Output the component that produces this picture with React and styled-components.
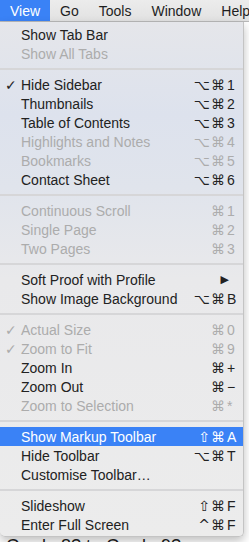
import React from 'react';
import styled, { createGlobalStyle, css } from 'styled-components';

// ---------------- DATA ----------------
const menuTitles = ['View', 'Go', 'Tools', 'Window', 'Help'];

const sections = [
  [
    { label: 'Show Tab Bar' },
    { label: 'Show All Tabs', disabled: true },
  ],
  [
    { label: 'Hide Sidebar', checked: true, mods: '⌥⌘', key: '1' },
    { label: 'Thumbnails', mods: '⌥⌘', key: '2' },
    { label: 'Table of Contents', mods: '⌥⌘', key: '3' },
    { label: 'Highlights and Notes', disabled: true, mods: '⌥⌘', key: '4' },
    { label: 'Bookmarks', disabled: true, mods: '⌥⌘', key: '5' },
    { label: 'Contact Sheet', mods: '⌥⌘', key: '6' },
  ],
  [
    { label: 'Continuous Scroll', disabled: true, mods: '⌘', key: '1' },
    { label: 'Single Page', disabled: true, mods: '⌘', key: '2' },
    { label: 'Two Pages', disabled: true, mods: '⌘', key: '3' },
  ],
  [
    { label: 'Soft Proof with Profile', submenu: true },
    { label: 'Show Image Background', mods: '⌥⌘', key: 'B' },
  ],
  [
    { label: 'Actual Size', checked: true, disabled: true, mods: '⌘', key: '0' },
    { label: 'Zoom to Fit', checked: true, disabled: true, mods: '⌘', key: '9' },
    { label: 'Zoom In', mods: '⌘', key: '+' },
    { label: 'Zoom Out', mods: '⌘', key: '−' },
    { label: 'Zoom to Selection', disabled: true, mods: '⌘', key: '*' },
  ],
  [
    { label: 'Show Markup Toolbar', selected: true, mods: '⇧⌘', key: 'A' },
    { label: 'Hide Toolbar', mods: '⌥⌘', key: 'T' },
    { label: 'Customise Toolbar…' },
  ],
  [
    { label: 'Slideshow', mods: '⇧⌘', key: 'F' },
    { label: 'Enter Full Screen', mods: '^⌘', key: 'F' },
  ],
];

// ---------------- COMPONENT ----------------
export default function App() {
  return (
    <>
      <GlobalStyle />
      <Screen>
        <MenuBar>
          {menuTitles.map((t, i) => (
            <MenuTitle key={t} $active={i === 0}>{t}</MenuTitle>
          ))}
        </MenuBar>

        <Document>
          <DocText>Grade 8? to Grade 9?</DocText>
        </Document>

        <Dropdown>
          {sections.map((items, si) => (
            <React.Fragment key={si}>
              {si > 0 && <Separator />}
              {items.map(item => (
                <Item key={item.label} $disabled={item.disabled} $selected={item.selected}>
                  {item.checked && <Check>✓</Check>}
                  <Label>{item.label}</Label>
                  {item.submenu && <Arrow>▶</Arrow>}
                  {item.key && (
                    <Shortcut>
                      <Mods>{item.mods}</Mods>
                      <Key>{item.key}</Key>
                    </Shortcut>
                  )}
                </Item>
              ))}
            </React.Fragment>
          ))}
        </Dropdown>
      </Screen>
    </>
  );
}

// ---------------- STYLES ----------------
const GlobalStyle = createGlobalStyle`
  body {
    margin: 0;
    font-family: 'Liberation Sans', 'DejaVu Sans', Arial, sans-serif;
  }
`;

const Screen = styled.div`
  position: relative;
  width: 249px;
  height: 542px;
  overflow: hidden;
  background: #f4f4f4;
`;

const MenuBar = styled.div`
  display: flex;
  height: 22px;
  background: linear-gradient(180deg, #ececec, #e2e2e2);
  border-bottom: 1px solid #b9b9b9;
  box-sizing: border-box;
  white-space: nowrap;
`;

const MenuTitle = styled.div`
  display: flex;
  align-items: center;
  padding: 0 10px;
  font-size: 14px;
  color: #1e1e1e;

  ${p => p.$active && css`
    background: #3a82f6;
    color: #fff;
  `}
`;

const Document = styled.div`
  height: 520px;
  background: #fff;
  display: flex;
  flex-direction: column;
  justify-content: flex-end;
  padding-left: 6px;
`;

const DocText = styled.div`
  font-size: 18px;
  line-height: 20px;
  color: #222;
  margin-bottom: -14px;
`;

const Dropdown = styled.div`
  position: absolute;
  top: 22px;
  left: 0;
  width: 244px;
  padding: 3px 0 2px;
  box-sizing: border-box;
  background: linear-gradient(180deg, #e5e6ea 0%, #dde2ed 18%, #e0e4ec 32%, #e9e9eb 50%, #ececec 100%);
  border-right: 1px solid #c4c4c4;
  border-bottom: 1px solid #c4c4c4;
  border-radius: 0 0 5px 5px;
  box-shadow: 0 4px 10px rgba(0, 0, 0, 0.25);
`;

const Separator = styled.div`
  height: 12px;
  display: flex;
  align-items: center;

  &::after {
    content: '';
    flex: 1;
    height: 2px;
    background: #d6d6d8;
  }
`;

const Item = styled.div`
  position: relative;
  display: flex;
  align-items: center;
  height: 19px;
  padding: 0 6px 0 21px;
  font-size: 14px;
  color: ${p => (p.$disabled ? '#acacac' : '#222')};
  white-space: nowrap;

  ${p => p.$selected && css`
    background: #3a82f6;
    color: #fff;
  `}
`;

const Check = styled.span`
  position: absolute;
  left: 5px;
  font-size: 14px;
  font-family: 'DejaVu Sans', sans-serif;
`;

const Label = styled.span`
  flex: 1;
`;

const Arrow = styled.span`
  font-size: 11px;
  font-family: 'DejaVu Sans', sans-serif;
  margin-right: 8px;
`;

const Shortcut = styled.span`
  display: flex;
  align-items: center;
`;

const Mods = styled.span`
  font-family: 'DejaVu Sans', sans-serif;
  font-size: 14px;
  letter-spacing: 1px;
  margin-right: 1px;
`;

const Key = styled.span`
  width: 10px;
  font-size: 14px;
  text-align: left;
`;
